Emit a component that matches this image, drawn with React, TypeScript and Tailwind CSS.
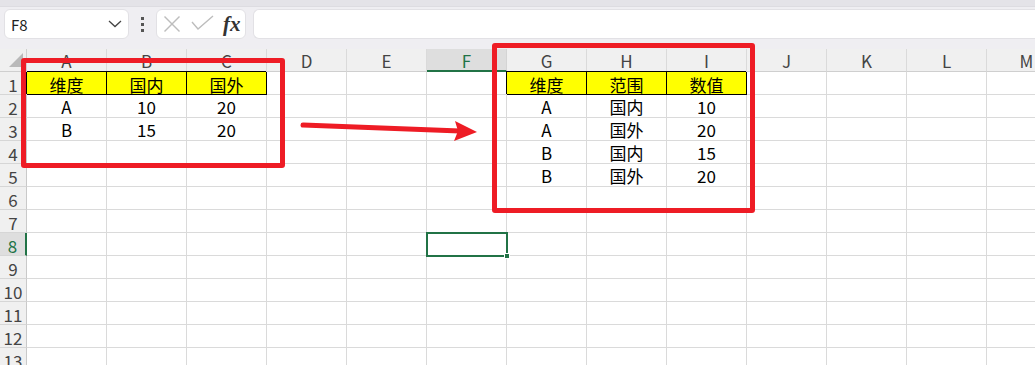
import React from "react";

const COLS = ["A", "B", "C", "D", "E", "F", "G", "H", "I", "J", "K", "L", "M"];
const ROWS = 13;

type Cell = { v: string; y?: boolean };
const data: Record<string, Cell> = {
  A1: { v: "维度", y: true },
  B1: { v: "国内", y: true },
  C1: { v: "国外", y: true },
  A2: { v: "A" },
  B2: { v: "10" },
  C2: { v: "20" },
  A3: { v: "B" },
  B3: { v: "15" },
  C3: { v: "20" },
  G1: { v: "维度", y: true },
  H1: { v: "范围", y: true },
  I1: { v: "数值", y: true },
  G2: { v: "A" },
  H2: { v: "国内" },
  I2: { v: "10" },
  G3: { v: "A" },
  H3: { v: "国外" },
  I3: { v: "20" },
  G4: { v: "B" },
  H4: { v: "国内" },
  I4: { v: "15" },
  G5: { v: "B" },
  H5: { v: "国外" },
  I5: { v: "20" },
};

function Toolbar() {
  return (
    <div className="h-[49px] bg-[#efeef2] flex flex-col">
      <div className="h-[7px] bg-[#e4e3e8] border-b border-[#dddce1]" />
      <div className="flex items-start pt-[2px] pl-[4px]">
        <div className="w-[125px] h-[30px] bg-white rounded-[6px] border border-[#e2e1e5] flex items-center pl-[6px] pr-[5px] justify-between">
          <span className="text-[15px] text-[#222] leading-none">F8</span>
          <svg width="14" height="8" viewBox="0 0 14 8" className="mr-[1px]">
            <polyline points="1,1 7,6.5 13,1" fill="none" stroke="#444" strokeWidth="1.3" />
          </svg>
        </div>
        <div className="w-[27px] h-[30px] flex items-center justify-center">
          <div className="flex flex-col gap-[3px]">
            <div className="w-[3px] h-[3px] bg-[#555]" />
            <div className="w-[3px] h-[3px] bg-[#555]" />
            <div className="w-[3px] h-[3px] bg-[#555]" />
          </div>
        </div>
        <div className="w-[90px] h-[30px] bg-white rounded-[6px] border border-[#e2e1e5] flex items-center pl-[6px]">
          <svg width="18" height="18" viewBox="0 0 18 18">
            <line x1="1.5" y1="1.5" x2="16.5" y2="16.5" stroke="#bdbdbd" strokeWidth="1.4" />
            <line x1="16.5" y1="1.5" x2="1.5" y2="16.5" stroke="#bdbdbd" strokeWidth="1.4" />
          </svg>
          <svg width="24" height="18" viewBox="0 0 24 18" className="ml-[10px]">
            <polyline points="1,7 7,14 22,1" fill="none" stroke="#bdbdbd" strokeWidth="1.4" />
          </svg>
          <span
            className="ml-[8px] text-[21px] italic font-bold text-[#333] leading-none"
            style={{ fontFamily: '"Liberation Serif", serif' }}
          >
            fx
          </span>
        </div>
        <div className="ml-[7px] flex-1 h-[30px] bg-white rounded-l-[6px] border border-r-0 border-[#e2e1e5]" />
      </div>
    </div>
  );
}

function Grid() {
  const cells: React.ReactNode[] = [];
  cells.push(
    <div key="corner" className="bg-[#f0f0f0] border-r border-b border-[#cfcfcf] relative">
      <svg width="27" height="23" viewBox="0 0 27 23" className="absolute inset-0">
        <polygon points="23,4 23,18 9,18" fill="#b9b9b9" />
      </svg>
    </div>
  );
  COLS.forEach((c) => {
    const sel = c === "F";
    cells.push(
      <div
        key={"h" + c}
        className={
          sel
            ? "bg-[#dedede] border-r border-[#d4d4d4] border-b-2 border-b-[#217346] text-[#217346] flex items-end justify-center pb-[1px] text-[17px] leading-none"
            : "bg-[#f0f0f0] border-r border-b border-r-[#dadada] border-b-[#cfcfcf] text-[#444] flex items-end justify-center pb-[2px] text-[17px] leading-none"
        }
      >
        {c}
      </div>
    );
  });
  for (let r = 1; r <= ROWS; r++) {
    const selRow = r === 8;
    cells.push(
      <div
        key={"r" + r}
        className={
          selRow
            ? "bg-[#dedede] border-r-2 border-r-[#217346] border-b border-b-[#d6d6d6] text-[#217346] flex items-end justify-center pb-[1px] text-[17px] leading-none"
            : "bg-[#f0f0f0] border-r border-b border-r-[#c9c9c9] border-b-[#d6d6d6] text-[#444] flex items-end justify-center pb-[1px] text-[17px] leading-none"
        }
      >
        {r}
      </div>
    );
    COLS.forEach((c) => {
      const d = data[c + r];
      const isSel = c === "F" && r === 8;
      if (d && d.y) {
        cells.push(
          <div
            key={c + r}
            className="bg-[#ffff00] border-r border-b border-black shadow-[-1px_-1px_0_0_#000] flex items-end justify-center pb-[1px] text-[17px] leading-none text-black"
          >
            {d.v}
          </div>
        );
      } else if (isSel) {
        cells.push(
          <div key={c + r} className="bg-white border-r border-b border-[#dadada] relative">
            <div className="absolute z-10 -left-[1px] -top-[1px] w-[82px] h-[25px] border-2 border-[#217346]">
              <div className="absolute left-[76px] top-[19px] w-[6px] h-[6px] bg-[#217346] border border-white" />
            </div>
          </div>
        );
      } else {
        cells.push(
          <div
            key={c + r}
            className="bg-white border-r border-b border-[#dadada] flex items-end justify-center pb-[2px] text-[17px] leading-none text-black"
          >
            {d ? d.v : ""}
          </div>
        );
      }
    });
  }
  return (
    <div className="grid grid-cols-[27px_repeat(13,80px)] auto-rows-[23px]">{cells}</div>
  );
}

export default function App() {
  return (
    <div
      className="relative w-[1035px] h-[365px] overflow-hidden bg-white"
      style={{ fontFamily: '"Noto Sans CJK SC", "Noto Sans", sans-serif' }}
    >
      <Toolbar />
      <Grid />
      <div className="absolute z-20 left-[21px] top-[58px] w-[264px] h-[110px] border-[5px] border-[#ee1c25] rounded-[3px]" />
      <div className="absolute z-20 left-[492px] top-[43px] w-[263px] h-[170px] border-[5px] border-[#ee1c25] rounded-[3px]" />
      <svg className="absolute z-20 left-0 top-0" width="1035" height="365" viewBox="0 0 1035 365">
        <line x1="303" y1="125" x2="460" y2="131" stroke="#ee1c25" strokeWidth="5" strokeLinecap="round" />
        <polygon points="455,121 477,132 454,141 458,131" fill="#ee1c25" />
      </svg>
    </div>
  );
}
